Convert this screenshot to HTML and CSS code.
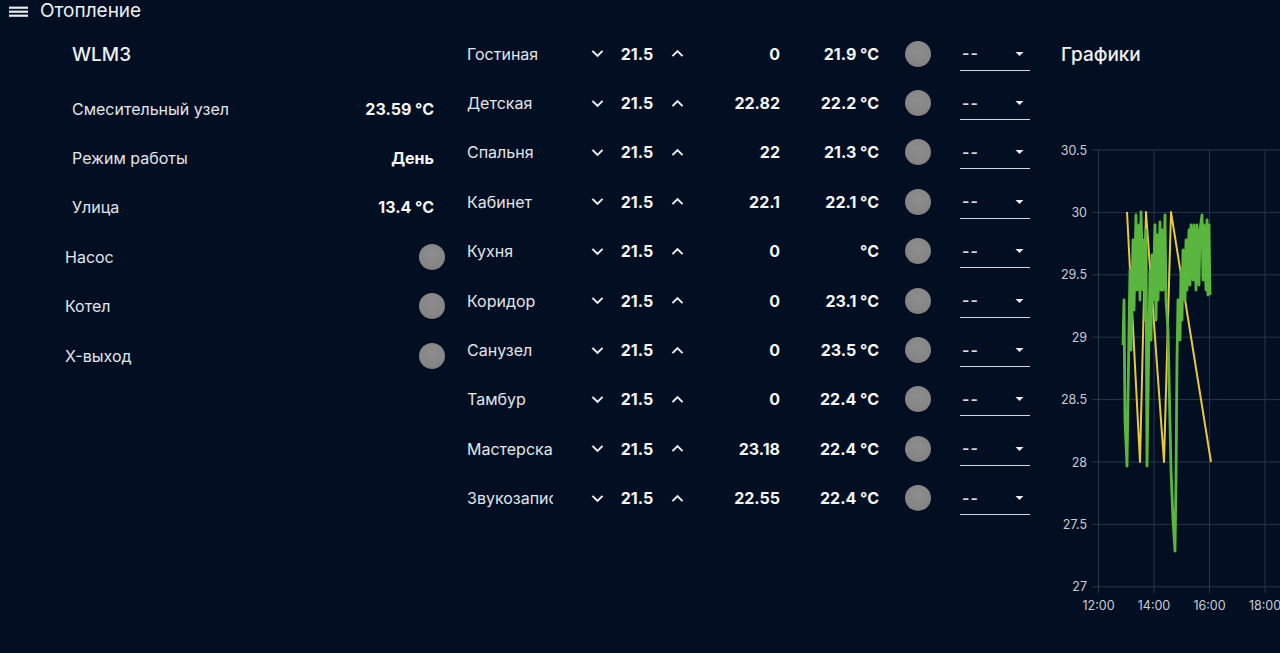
FILE: index.html
```html
<!DOCTYPE html>
<html lang="ru">
<head>
<meta charset="utf-8">
<title>Отопление</title>
<link rel="stylesheet" href="styles.css">
</head>
<body>
<header class="topbar">
  <svg class="menu-icon" width="20" height="20" viewBox="0 0 20 20"><rect x="0" y="5.6" width="19" height="2.2" fill="#e8eaee"/><rect x="0" y="9.6" width="19" height="2.2" fill="#e8eaee"/><rect x="0" y="13.6" width="19" height="2.2" fill="#e8eaee"/></svg>
  <span class="page-title">Отопление</span>
</header>
<main class="main">
  <section class="col-left">
    <div class="group-title">WLM3</div>
    <div class="text-row"><span class="lbl">Смесительный узел</span><span class="val">23.59 °C</span></div>
    <div class="text-row"><span class="lbl">Режим работы</span><span class="val">День</span></div>
    <div class="text-row"><span class="lbl">Улица</span><span class="val">13.4 °C</span></div>
    <div class="led-row"><span class="lbl">Насос</span><span class="led"></span></div>
    <div class="led-row"><span class="lbl">Котел</span><span class="led"></span></div>
    <div class="led-row"><span class="lbl">X-выход</span><span class="led"></span></div>
  </section>
  <section class="col-mid">
    <div class="room"><span class="name">Гостиная</span><span class="btn"><svg viewBox="0 0 24 24"><path d="M7.41 8.59L12 13.17l4.59-4.58L18 10l-6 6-6-6z"/></svg></span><span class="num">21.5</span><span class="btn"><svg viewBox="0 0 24 24"><path d="M7.41 15.41L12 10.83l4.59 4.58L18 14l-6-6-6 6z"/></svg></span><span class="v1">0</span><span class="v2">21.9 °C</span><span class="led"></span><span class="sel"><span>--</span><svg viewBox="0 0 24 24"><path d="M7 10l5 5 5-5z"/></svg></span></div>
    <div class="room"><span class="name">Детская</span><span class="btn"><svg viewBox="0 0 24 24"><path d="M7.41 8.59L12 13.17l4.59-4.58L18 10l-6 6-6-6z"/></svg></span><span class="num">21.5</span><span class="btn"><svg viewBox="0 0 24 24"><path d="M7.41 15.41L12 10.83l4.59 4.58L18 14l-6-6-6 6z"/></svg></span><span class="v1">22.82</span><span class="v2">22.2 °C</span><span class="led"></span><span class="sel"><span>--</span><svg viewBox="0 0 24 24"><path d="M7 10l5 5 5-5z"/></svg></span></div>
    <div class="room"><span class="name">Спальня</span><span class="btn"><svg viewBox="0 0 24 24"><path d="M7.41 8.59L12 13.17l4.59-4.58L18 10l-6 6-6-6z"/></svg></span><span class="num">21.5</span><span class="btn"><svg viewBox="0 0 24 24"><path d="M7.41 15.41L12 10.83l4.59 4.58L18 14l-6-6-6 6z"/></svg></span><span class="v1">22</span><span class="v2">21.3 °C</span><span class="led"></span><span class="sel"><span>--</span><svg viewBox="0 0 24 24"><path d="M7 10l5 5 5-5z"/></svg></span></div>
    <div class="room"><span class="name">Кабинет</span><span class="btn"><svg viewBox="0 0 24 24"><path d="M7.41 8.59L12 13.17l4.59-4.58L18 10l-6 6-6-6z"/></svg></span><span class="num">21.5</span><span class="btn"><svg viewBox="0 0 24 24"><path d="M7.41 15.41L12 10.83l4.59 4.58L18 14l-6-6-6 6z"/></svg></span><span class="v1">22.1</span><span class="v2">22.1 °C</span><span class="led"></span><span class="sel"><span>--</span><svg viewBox="0 0 24 24"><path d="M7 10l5 5 5-5z"/></svg></span></div>
    <div class="room"><span class="name">Кухня</span><span class="btn"><svg viewBox="0 0 24 24"><path d="M7.41 8.59L12 13.17l4.59-4.58L18 10l-6 6-6-6z"/></svg></span><span class="num">21.5</span><span class="btn"><svg viewBox="0 0 24 24"><path d="M7.41 15.41L12 10.83l4.59 4.58L18 14l-6-6-6 6z"/></svg></span><span class="v1">0</span><span class="v2">°C</span><span class="led"></span><span class="sel"><span>--</span><svg viewBox="0 0 24 24"><path d="M7 10l5 5 5-5z"/></svg></span></div>
    <div class="room"><span class="name">Коридор</span><span class="btn"><svg viewBox="0 0 24 24"><path d="M7.41 8.59L12 13.17l4.59-4.58L18 10l-6 6-6-6z"/></svg></span><span class="num">21.5</span><span class="btn"><svg viewBox="0 0 24 24"><path d="M7.41 15.41L12 10.83l4.59 4.58L18 14l-6-6-6 6z"/></svg></span><span class="v1">0</span><span class="v2">23.1 °C</span><span class="led"></span><span class="sel"><span>--</span><svg viewBox="0 0 24 24"><path d="M7 10l5 5 5-5z"/></svg></span></div>
    <div class="room"><span class="name">Санузел</span><span class="btn"><svg viewBox="0 0 24 24"><path d="M7.41 8.59L12 13.17l4.59-4.58L18 10l-6 6-6-6z"/></svg></span><span class="num">21.5</span><span class="btn"><svg viewBox="0 0 24 24"><path d="M7.41 15.41L12 10.83l4.59 4.58L18 14l-6-6-6 6z"/></svg></span><span class="v1">0</span><span class="v2">23.5 °C</span><span class="led"></span><span class="sel"><span>--</span><svg viewBox="0 0 24 24"><path d="M7 10l5 5 5-5z"/></svg></span></div>
    <div class="room"><span class="name">Тамбур</span><span class="btn"><svg viewBox="0 0 24 24"><path d="M7.41 8.59L12 13.17l4.59-4.58L18 10l-6 6-6-6z"/></svg></span><span class="num">21.5</span><span class="btn"><svg viewBox="0 0 24 24"><path d="M7.41 15.41L12 10.83l4.59 4.58L18 14l-6-6-6 6z"/></svg></span><span class="v1">0</span><span class="v2">22.4 °C</span><span class="led"></span><span class="sel"><span>--</span><svg viewBox="0 0 24 24"><path d="M7 10l5 5 5-5z"/></svg></span></div>
    <div class="room"><span class="name">Мастерская</span><span class="btn"><svg viewBox="0 0 24 24"><path d="M7.41 8.59L12 13.17l4.59-4.58L18 10l-6 6-6-6z"/></svg></span><span class="num">21.5</span><span class="btn"><svg viewBox="0 0 24 24"><path d="M7.41 15.41L12 10.83l4.59 4.58L18 14l-6-6-6 6z"/></svg></span><span class="v1">23.18</span><span class="v2">22.4 °C</span><span class="led"></span><span class="sel"><span>--</span><svg viewBox="0 0 24 24"><path d="M7 10l5 5 5-5z"/></svg></span></div>
    <div class="room"><span class="name">Звукозапись</span><span class="btn"><svg viewBox="0 0 24 24"><path d="M7.41 8.59L12 13.17l4.59-4.58L18 10l-6 6-6-6z"/></svg></span><span class="num">21.5</span><span class="btn"><svg viewBox="0 0 24 24"><path d="M7.41 15.41L12 10.83l4.59 4.58L18 14l-6-6-6 6z"/></svg></span><span class="v1">22.55</span><span class="v2">22.4 °C</span><span class="led"></span><span class="sel"><span>--</span><svg viewBox="0 0 24 24"><path d="M7 10l5 5 5-5z"/></svg></span></div>
  </section>
  <section class="col-right">
    <div class="group-title">Графики</div>
    <svg class="chart" width="230" height="480" viewBox="1050 135 230 480">
      <g stroke="#2b3648" stroke-width="1">
        <line x1="1092" y1="150" x2="1280" y2="150"/>
        <line x1="1092" y1="212.4" x2="1280" y2="212.4"/>
        <line x1="1092" y1="274.8" x2="1280" y2="274.8"/>
        <line x1="1092" y1="337.2" x2="1280" y2="337.2"/>
        <line x1="1092" y1="399.6" x2="1280" y2="399.6"/>
        <line x1="1092" y1="462" x2="1280" y2="462"/>
        <line x1="1092" y1="524.4" x2="1280" y2="524.4"/>
        <line x1="1092" y1="586.8" x2="1280" y2="586.8"/>
        <line x1="1098.5" y1="150" x2="1098.5" y2="593"/>
        <line x1="1154" y1="150" x2="1154" y2="593"/>
        <line x1="1209.5" y1="150" x2="1209.5" y2="593"/>
        <line x1="1265" y1="150" x2="1265" y2="593"/>
      </g>
      <g class="axis" text-anchor="end">
        <text x="1087" y="154.5">30.5</text>
        <text x="1087" y="216.9">30</text>
        <text x="1087" y="279.3">29.5</text>
        <text x="1087" y="341.7">29</text>
        <text x="1087" y="404.1">28.5</text>
        <text x="1087" y="466.5">28</text>
        <text x="1087" y="528.9">27.5</text>
        <text x="1087" y="591.3">27</text>
      </g>
      <g class="axis" text-anchor="middle">
        <text x="1098.5" y="609.5">12:00</text>
        <text x="1154" y="609.5">14:00</text>
        <text x="1209.5" y="609.5">16:00</text>
        <text x="1265" y="609.5">18:00</text>
      </g>
      <path fill="none" stroke="#e8c93a" stroke-width="2" stroke-linejoin="round" d="M1127,212 L1140,462 L1146,212 L1164,462 L1171,212 L1211,462"/>
      <path fill="none" stroke="#5bb640" stroke-width="2.8" stroke-linejoin="round" d="M1123,345 L1124,300 L1125,420 L1127,466 L1129,330 L1130,270 L1131,350 L1133,240 L1134,310 L1136,215 L1137,290 L1139,225 L1140,300 L1141,212 L1143,290 L1144,240 L1145,320 L1146,230 L1147,466 L1149,330 L1150,270 L1151,340 L1152,255 L1153,300 L1155,225 L1156,320 L1157,235 L1158,300 L1160,222 L1161,290 L1162,230 L1163,290 L1165,215 L1166,300 L1168,330 L1171,470 L1173,520 L1175,551 L1176,480 L1177,360 L1178,300 L1180,340 L1181,270 L1182,320 L1183,250 L1185,300 L1186,240 L1187,290 L1189,230 L1190,285 L1191,225 L1193,280 L1194,225 L1196,290 L1197,225 L1199,285 L1200,230 L1202,215 L1203,280 L1204,225 L1206,290 L1207,220 L1208,295 L1209,225 L1210,295"/>
    </svg>
  </section>
</main>
</body>
</html>
```

FILE: styles.css
```css
* { box-sizing: border-box; }
html, body {
  margin: 0;
  padding: 0;
  background: #020e22;
  color: #e4e7ec;
  font-family: Inter, "Liberation Sans", Arial, sans-serif;
  height: 100%;
  overflow: hidden;
}
.topbar {
  height: 22px;
  display: flex;
  align-items: center;
  padding-left: 9px;
}
.menu-icon { display: block; }
.page-title {
  margin-left: 11px;
  font-size: 19px;
  color: #eef0f3;
  line-height: 22px;
}
.main {
  display: flex;
  padding-top: 7px;
}
.col-left {
  width: 453px;
  padding-left: 57px;
  padding-right: 8px;
  flex: none;
}
.group-title {
  height: 50px;
  display: flex;
  align-items: center;
  font-size: 19px;
  font-weight: 500;
  color: #eef0f3;
}
.col-left .group-title { padding-left: 15px; margin-bottom: 5px; }
.text-row, .led-row {
  height: 49.4px;
  display: flex;
  align-items: center;
  justify-content: space-between;
  font-size: 16px;
}
.text-row { padding-left: 15px; padding-right: 11px; }
.led-row { padding-left: 8px; }
.lbl { color: #e2e5ea; }
.val { font-weight: 700; color: #f4f5f7; }
.led {
  width: 26px;
  height: 26px;
  border-radius: 50%;
  background: radial-gradient(circle at 50% 38%, #8d8d8d 0%, #868686 60%, #747474 100%);
  box-shadow: 0 1px 1px rgba(0,0,0,0.5);
  flex: none;
}
.col-mid {
  width: 597px;
  padding-left: 14px;
  flex: none;
}
.room {
  height: 49.4px;
  display: flex;
  align-items: center;
  font-size: 16px;
}
.name {
  width: 86px;
  overflow: hidden;
  white-space: nowrap;
  color: #e2e5ea;
  flex: none;
}
.btn {
  width: 24px;
  height: 24px;
  display: flex;
  align-items: center;
  justify-content: center;
  flex: none;
}
.btn svg { width: 23px; height: 23px; fill: #eef0f3; }
.room .btn:nth-child(2) { margin-left: 32px; }
.num {
  width: 56px;
  text-align: center;
  font-weight: 700;
  color: #f4f5f7;
  flex: none;
}
.v1 {
  width: 91px;
  text-align: right;
  font-weight: 700;
  color: #f4f5f7;
  flex: none;
}
.v2 {
  width: 99px;
  text-align: right;
  font-weight: 700;
  color: #f4f5f7;
  flex: none;
}
.room .led { margin-left: 26px; }
.sel {
  margin-left: 29px;
  width: 70px;
  height: 34px;
  display: flex;
  align-items: center;
  justify-content: space-between;
  padding-left: 2px;
  padding-right: 1px;
  border-bottom: 1px solid #d2d6dc;
  flex: none;
}
.sel span { color: #d8dbe0; font-size: 16px; font-weight: 600; letter-spacing: 1px; }
.sel svg { width: 19px; height: 19px; fill: #eef0f3; }
.col-right {
  flex: 1;
  padding-left: 11px;
}
.chart {
  display: block;
  margin-left: -11px;
  margin-top: 56px;
}
.axis text {
  font-size: 12.5px;
  fill: #c9cdd4;
  font-family: Inter, "Liberation Sans", Arial, sans-serif;
}
```
